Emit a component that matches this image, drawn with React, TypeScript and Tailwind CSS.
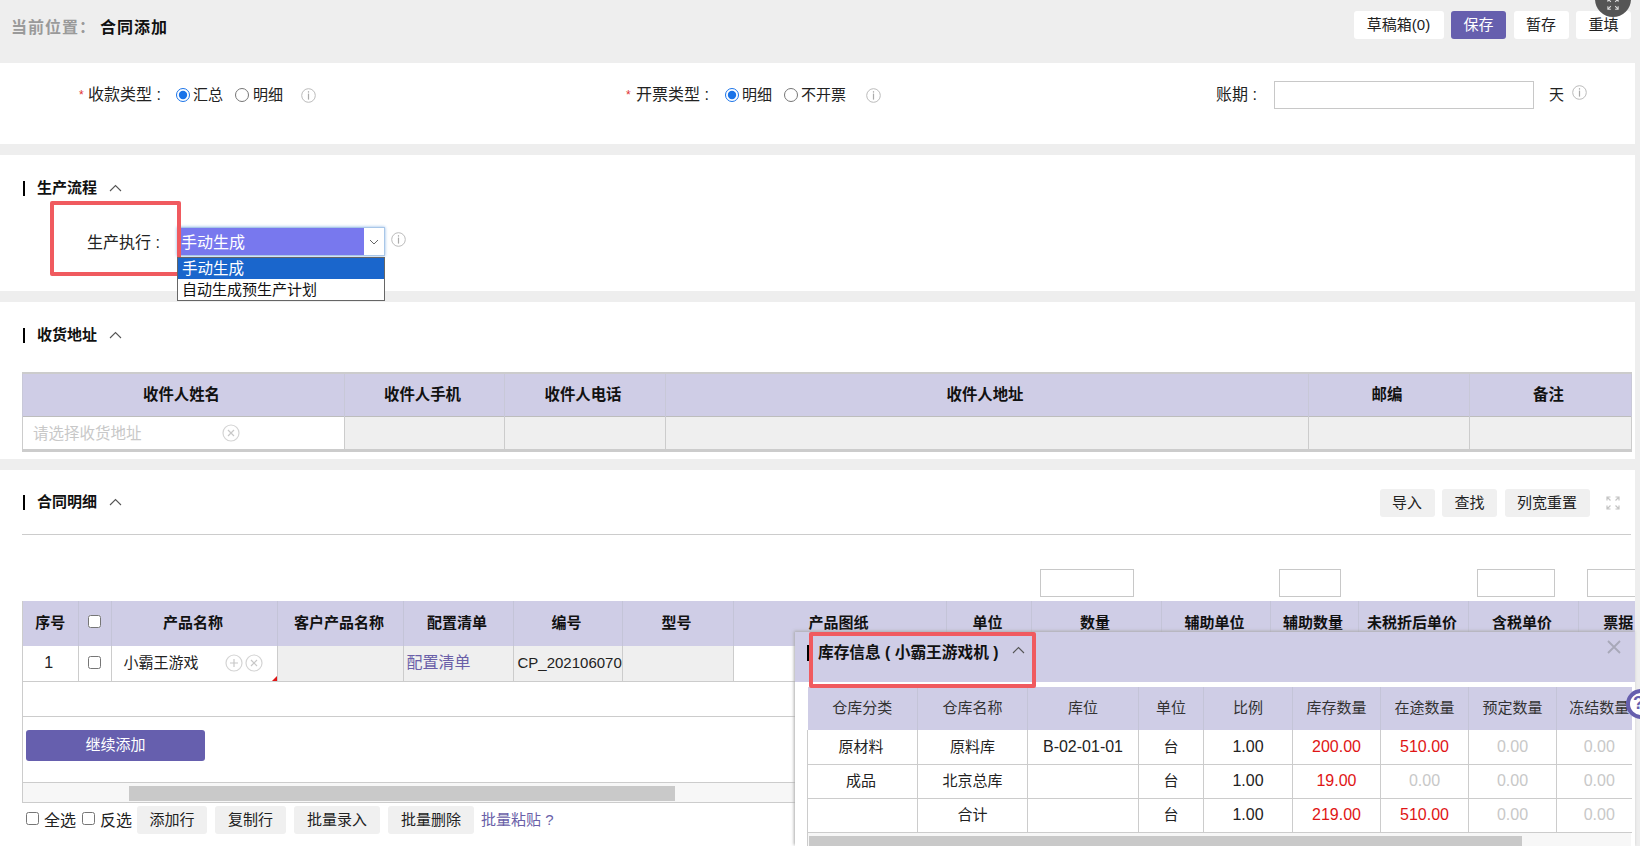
import React from "react";

const Info = ({ className = "" }: { className?: string }) => (
  <svg width="15" height="15" viewBox="0 0 15 15" fill="none" className={className}>
    <circle cx="7.5" cy="7.5" r="6.8" stroke="#bbbbbb" strokeWidth="1" />
    <rect x="6.9" y="3.2" width="1.2" height="1.4" fill="#aaaaaa" />
    <rect x="6.9" y="5.6" width="1.2" height="6" fill="#aaaaaa" />
  </svg>
);

const ChevronUp = ({ className = "" }: { className?: string }) => (
  <svg width="13" height="8" viewBox="0 0 13 8" fill="none" className={className}>
    <path d="M1 7L6.5 1.5L12 7" stroke="#555555" strokeWidth="1.1" />
  </svg>
);

const Expand = ({ color, size = 14 }: { color: string; size?: number }) => (
  <svg width={size} height={size} viewBox="0 0 14 14" fill="none">
    <path d="M1 4.5V1H4.5M1 1L4.5 4.5M13 4.5V1H9.5M13 1L9.5 4.5M1 9.5V13H4.5M1 13L4.5 9.5M13 9.5V13H9.5M13 13L9.5 9.5" stroke={color} strokeWidth="1.2" />
  </svg>
);

const CircleIcon = ({ kind }: { kind: "plus" | "x" }) => (
  <svg width="18" height="18" viewBox="0 0 18 18" fill="none">
    <circle cx="9" cy="9" r="8" stroke="#d4d4d4" strokeWidth="1.2" />
    {kind === "plus" ? (
      <path d="M9 5V13M5 9H13" stroke="#c8c8c8" strokeWidth="1.2" />
    ) : (
      <path d="M6 6L12 12M12 6L6 12" stroke="#c8c8c8" strokeWidth="1.2" />
    )}
  </svg>
);

const Heading = ({ title }: { title: string }) => (
  <div className="flex items-center h-[20px]">
    <span className="w-[2px] h-[15px] bg-black ml-[1px]" />
    <span className="ml-[12px] font-bold text-[15px] text-[#111]">{title}</span>
    <ChevronUp className="ml-[12px]" />
  </div>
);

const Radio = ({ checked = false, name }: { checked?: boolean; name: string }) => (
  <input type="radio" name={name} defaultChecked={checked} className="w-[14px] h-[14px] m-0 accent-[#1a73e8]" />
);

const Btn = ({ children, className = "" }: { children: React.ReactNode; className?: string }) => (
  <button className={`h-[28px] rounded-[3px] pt-[1px] text-[15px] text-[#222] flex items-center justify-center ${className}`}>
    {children}
  </button>
);

const SmallInput = ({ className }: { className: string }) => (
  <div className={`h-[28px] shrink-0 border border-[#c8c8c8] bg-white ${className}`} />
);

const Check = ({ className = "" }: { className?: string }) => (
  <input type="checkbox" className={`w-[13px] h-[13px] m-0 align-middle ${className}`} />
);

const addressCols = ["收件人姓名", "收件人手机", "收件人电话", "收件人地址", "邮编", "备注"];
const mainCols = ["序号", "", "产品名称", "客户产品名称", "配置清单", "编号", "型号", "产品图纸", "单位", "数量", "辅助单位", "辅助数量", "未税折后单价", "含税单价", "票据"];
const stockCols = ["仓库分类", "仓库名称", "库位", "单位", "比例", "库存数量", "在途数量", "预定数量", "冻结数量"];
const stockRows = [
  ["原材料", "原料库", "B-02-01-01", "台", "1.00", "200.00", "510.00", "0.00", "0.00"],
  ["成品", "北京总库", "", "台", "1.00", "19.00", "0.00", "0.00", "0.00"],
  ["", "合计", "", "台", "1.00", "219.00", "510.00", "0.00", "0.00"],
];
const numClass = (v: string, i: number) => {
  const color = i >= 5 ? (v === "0.00" ? "text-[#c8c8c8]" : "text-[#e01515]") : "text-[#222]";
  const size = i === 2 || i >= 4 ? "text-[16px]" : "text-[15px]";
  const pad = i === 8 ? "pl-[10px]" : i === 0 ? "pr-[3px]" : "";
  return `${color} ${size} ${pad}`;
};

export default function App() {
  return (
    <div className="relative w-[1640px] h-[846px] overflow-hidden bg-[#eeeeee] text-[15px] text-[#222] font-['Liberation_Sans','Noto_Sans_CJK_SC',sans-serif]">
      {/* top bar */}
      <header className="h-[63px] w-[1635px] flex items-start justify-between pl-[11px] pr-[4px] pt-[11px]">
        <div className="flex items-center h-[34px] font-bold text-[16px] tracking-[1px]">
          <span className="w-[89px] text-[#9a9a9a]">当前位置：</span>
          <span className="text-[#111]">合同添加</span>
        </div>
        <div className="flex gap-[7.5px]">
          <Btn className="w-[90px] bg-white">草稿箱(0)</Btn>
          <Btn className="w-[55px] bg-[#665fae] !text-white">保存</Btn>
          <Btn className="w-[55px] bg-white">暂存</Btn>
          <Btn className="w-[55px] bg-white">重填</Btn>
        </div>
      </header>

      {/* payment row */}
      <section className="h-[81px] w-[1635px] bg-white pt-[18px] pl-[79px] grid grid-cols-[547px_590px_1fr] items-start">
        <div className="flex items-center h-[28px]">
          <span className="text-[#e03030] text-[12px] w-[9px]">*</span>
          <span className="w-[88px] text-[16px] whitespace-nowrap">收款类型 :</span>
          <Radio name="a" checked />
          <span className="ml-[3px] w-[42px]">汇总</span>
          <Radio name="a" />
          <span className="ml-[4px] w-[48px]">明细</span>
          <Info />
        </div>
        <div className="flex items-center h-[28px]">
          <span className="text-[#e03030] text-[12px] w-[10px]">*</span>
          <span className="w-[89px] text-[16px] whitespace-nowrap">开票类型 :</span>
          <Radio name="b" checked />
          <span className="ml-[3px] w-[42px]">明细</span>
          <Radio name="b" />
          <span className="ml-[3px] w-[65px]">不开票</span>
          <Info />
        </div>
        <div className="flex items-center h-[28px]">
          <span className="w-[58px] text-[16px] whitespace-nowrap">账期 :</span>
          <div className="w-[260px] h-[28px] border border-[#c8c8c8]" />
          <span className="ml-[15px]">天</span>
          <Info className="ml-[8px] -mt-[6px]" />
        </div>
      </section>

      {/* production flow */}
      <section className="relative h-[136px] w-[1635px] mt-[11px] bg-white pt-[23px] pl-[22px]">
        <Heading title="生产流程" />
        <div className="flex items-center mt-[29px] h-[29px]">
          <span className="ml-[65px] w-[90px] pt-[3px] text-[16px] whitespace-nowrap">生产执行 :</span>
          <div className="w-[208px] h-[29px] flex border border-[#a9c7e8] shadow-[0_0_3px_#8fb8e8]">
            <div className="flex-1 bg-[#7878ee] text-white pl-[3px] text-[16px] leading-[29px]">手动生成</div>
            <div className="w-[20px] bg-white flex items-center justify-center">
              <svg width="10" height="6" viewBox="0 0 10 6" fill="none">
                <path d="M1 1L5 5L9 1" stroke="#666666" strokeWidth="1" />
              </svg>
            </div>
          </div>
          <Info className="ml-[6px] -mt-[5px]" />
        </div>
        <div className="absolute left-[177px] top-[102px] w-[208px] h-[44px] z-10 bg-white border border-[#666666] text-[15px] leading-[21px]">
          <div className="h-[21px] bg-[#1a66cc] text-white pl-[4px] text-[15.5px]">手动生成</div>
          <div className="h-[21px] text-[#111] pl-[4px]">自动生成预生产计划</div>
        </div>
        <div className="absolute left-[50px] top-[46px] w-[131px] h-[75px] border-[4px] border-[#f05a5f] rounded-[2px]" />
      </section>

      {/* address */}
      <section className="h-[157px] w-[1635px] mt-[11px] bg-white pt-[23px] pl-[22px]">
        <Heading title="收货地址" />
        <table className="mt-[27px] w-[1609px] table-fixed border-collapse border-r border-t-2 border-b-[3px] border-[#cccccc]">
          <colgroup>
            <col className="w-[322px]" />
            <col className="w-[160px]" />
            <col className="w-[161px]" />
            <col className="w-[643px]" />
            <col className="w-[161px]" />
            <col className="w-[162px]" />
          </colgroup>
          <thead>
            <tr className="h-[43px] bg-[#cfcde6] border-b border-[#bdbdbd]">
              {addressCols.map((c) => (
                <th key={c} className="border-x border-[#c8c8d8] font-bold text-[#111] pr-[4px] text-[15.4px]">{c}</th>
              ))}
            </tr>
          </thead>
          <tbody>
            <tr className="h-[34px]">
              <td className="border-l border-[#cccccc] bg-white pl-[10px]">
                <div className="flex items-center text-[#c8c8c8]">
                  <span className="w-[189px] pt-[3px] text-[15.5px]">请选择收货地址</span>
                  <span className="pt-[1px]"><CircleIcon kind="x" /></span>
                </div>
              </td>
              {[1, 2, 3, 4, 5].map((i) => (
                <td key={i} className="border-l border-[#cccccc] bg-[#efefef]" />
              ))}
            </tr>
          </tbody>
        </table>
      </section>

      {/* contract detail */}
      <section className="w-[1635px] h-[376px] mt-[11px] bg-white overflow-hidden">
        <div className="flex items-start justify-between pl-[22px] pr-[15px] pt-[19px] h-[47px]">
          <div className="pt-[3px]"><Heading title="合同明细" /></div>
          <div className="flex items-center gap-[7.5px]">
            <Btn className="w-[55px] bg-[#f0f0f0]">导入</Btn>
            <Btn className="w-[55px] bg-[#f0f0f0]">查找</Btn>
            <Btn className="w-[85px] bg-[#f0f0f0]">列宽重置</Btn>
            <span className="ml-[9px]"><Expand color="#c4c4c4" /></span>
          </div>
        </div>
        <div className="ml-[22px] mr-[4px] mt-[17px] border-t border-[#cccccc]" />
        <div className="flex mt-[34px]">
          <SmallInput className="ml-[1040px] w-[94px]" />
          <SmallInput className="ml-[145px] w-[62px]" />
          <SmallInput className="ml-[136px] w-[78px]" />
          <SmallInput className="ml-[32px] w-[60px]" />
        </div>
        <div className="ml-[22px] mt-[4px] overflow-hidden border-l border-[#cccccc]">
          <table className="w-[1637px] table-fixed border-collapse">
            <colgroup>
              <col className="w-[55px]" />
              <col className="w-[33px]" />
              <col className="w-[166px]" />
              <col className="w-[126px]" />
              <col className="w-[110px]" />
              <col className="w-[109px]" />
              <col className="w-[111px]" />
              <col className="w-[213px]" />
              <col className="w-[85px]" />
              <col className="w-[130px]" />
              <col className="w-[109px]" />
              <col className="w-[88px]" />
              <col className="w-[110px]" />
              <col className="w-[110px]" />
              <col className="w-[82px]" />
            </colgroup>
            <thead>
              <tr className="h-[45px] bg-[#cfcde6]">
                {mainCols.map((c, i) => (
                  <th key={i} className={`border-l border-[#c4c4d8] first:border-l-0 font-bold text-[#111] p-0 whitespace-nowrap ${i < 2 ? "" : "pr-[2px]"}`}>
                    {i === 1 ? <Check className="-mt-[6px]" /> : c}
                  </th>
                ))}
              </tr>
            </thead>
            <tbody>
              <tr className="h-[35px] border-b border-[#cccccc]">
                <td className="text-center text-[16px] pr-[3px]">1</td>
                <td className="border-l border-[#cccccc] text-center"><Check className="-mt-[4px]" /></td>
                <td className="relative border-l border-[#cccccc] pl-[12px]">
                  <div className="flex items-center">
                    <span className="w-[101px] whitespace-nowrap">小霸王游戏</span>
                    <CircleIcon kind="plus" />
                    <span className="ml-[2px]"><CircleIcon kind="x" /></span>
                  </div>
                  <span className="absolute right-0 bottom-0 w-0 h-0 border-l-[5px] border-b-[5px] border-l-transparent border-b-[#e01515]" />
                </td>
                <td className="border-l border-[#cccccc] bg-[#efefef]" />
                <td className="border-l border-[#cccccc] bg-[#efefef] pl-[3px] text-[16px] text-[#6a5fa8]">配置清单</td>
                <td className="border-l border-[#cccccc] bg-[#efefef] pl-[4px] overflow-hidden whitespace-nowrap">CP_202106070001</td>
                <td className="border-l border-[#cccccc] bg-[#efefef]" />
                <td className="border-l border-[#cccccc]" colSpan={8} />
              </tr>
            </tbody>
          </table>
          <div className="h-[35px] border-b border-[#cccccc]" />
          <div className="h-[66px] border-b border-[#cccccc] pt-[13px] pl-[3px]">
            <button className="w-[179px] h-[31px] rounded-[3px] bg-[#665fae] text-white">继续添加</button>
          </div>
          <div className="h-[20px] bg-[#f7f7f7] border-b border-[#cccccc] pt-[3px] pl-[106px]">
            <div className="w-[546px] h-[15px] bg-[#c9c9c9]" />
          </div>
        </div>
        <div className="flex items-center ml-[26px] mt-[3px] h-[28px]">
          <Check className="-mt-[3px]" />
          <span className="ml-[5px] w-[38px] pt-[2px] text-[16px] whitespace-nowrap">全选</span>
          <Check className="-mt-[3px]" />
          <span className="ml-[5px] w-[37px] pt-[2px] text-[16px] whitespace-nowrap">反选</span>
          <Btn className="w-[70px] bg-[#f0f0f0]">添加行</Btn>
          <Btn className="ml-[8px] w-[71px] bg-[#f0f0f0]">复制行</Btn>
          <Btn className="ml-[8px] w-[86px] bg-[#f0f0f0]">批量录入</Btn>
          <Btn className="ml-[8px] w-[86px] bg-[#f0f0f0]">批量删除</Btn>
          <span className="ml-[7px] pt-[2px] text-[#6a5fa8] whitespace-nowrap">批量粘贴 ?</span>
        </div>
      </section>

      {/* stock popup */}
      <aside className="absolute left-[795px] top-[632px] w-[840px] h-[214px] bg-white shadow-[-1px_-1px_3px_#aaaaaa] z-20">
        <div className="relative h-[50px] bg-[#cfcde6] pl-[12px] pt-[9px]">
          <div className="flex items-center h-[24px]">
            <span className="w-[2px] h-[16px] bg-black" />
            <span className="ml-[9px] font-bold text-[15.7px] text-[#111] whitespace-nowrap">库存信息 ( 小霸王游戏机 )</span>
            <ChevronUp className="ml-[14px] -mt-[6px]" />
          </div>
          <svg width="14" height="14" viewBox="0 0 14 14" fill="none" className="absolute right-[14px] top-[8px]">
            <path d="M1 1L13 13M13 1L1 13" stroke="#a8a8b8" strokeWidth="1.8" />
          </svg>
        </div>
        <div className="ml-[12px] mt-[5px] w-[824px]">
          <table className="w-[824px] table-fixed border-collapse">
            <colgroup>
              <col className="w-[110px]" />
              <col className="w-[110px]" />
              <col className="w-[111px]" />
              <col className="w-[65px]" />
              <col className="w-[89px]" />
              <col className="w-[88px]" />
              <col className="w-[88px]" />
              <col className="w-[88px]" />
              <col className="w-[75px]" />
            </colgroup>
            <thead>
              <tr className="h-[43px] bg-[#cfcde6]">
                {stockCols.map((c, i) => (
                  <th key={c} className={`border-l border-[#c4c4d8] first:border-l-0 font-normal text-[#333] p-0 whitespace-nowrap ${i === 8 ? "pl-[10px]" : ""}`}>{c}</th>
                ))}
              </tr>
            </thead>
            <tbody>
              {stockRows.map((row, r) => (
                <tr key={r} className="h-[34px] border-b border-[#cccccc]">
                  {row.map((v, i) => (
                    <td key={i} className={`border-l border-[#cccccc] text-center p-0 whitespace-nowrap ${numClass(v, i)}`}>{v}</td>
                  ))}
                </tr>
              ))}
            </tbody>
          </table>
          <div className="h-[14px] bg-[#f7f7f7] border-l border-[#cccccc] pt-[3px] pl-[1px]">
            <div className="w-[713px] h-[11px] bg-[#c9c9c9]" />
          </div>
        </div>
      </aside>
      <div className="absolute left-[809px] top-[632px] w-[227px] h-[56px] border-[4px] border-[#f05a5f] rounded-[2px] z-30" />

      {/* floating help + fullscreen */}
      <div className="absolute left-[1626px] top-[689px] w-[30px] h-[30px] rounded-full border-[4px] border-[#665fae] bg-white z-30 pl-[3px] leading-[20px] font-bold text-[#665fae] text-[18px]">?</div>
      <div className="absolute left-[1595px] top-[-19px] w-[36px] h-[36px] rounded-full bg-[#555555] z-30 flex items-end justify-center pb-[7px]">
        <Expand color="#dddddd" size={12} />
      </div>
    </div>
  );
}
